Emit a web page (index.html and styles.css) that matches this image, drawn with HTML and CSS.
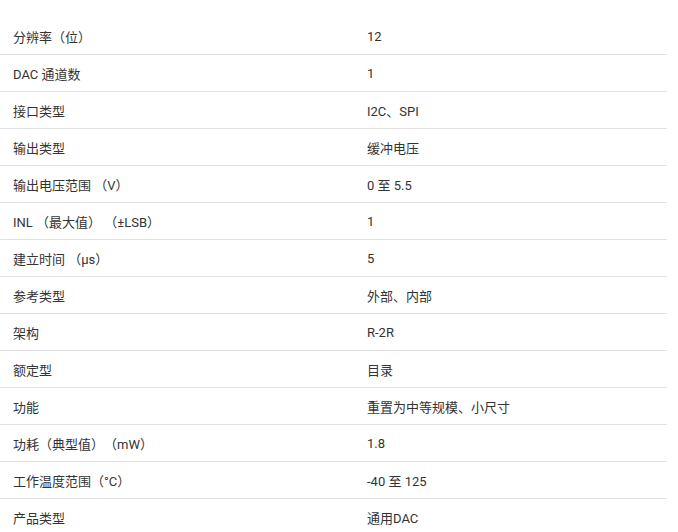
FILE: index.html
```html
<!DOCTYPE html>
<html lang="zh-CN">
<head>
<meta charset="utf-8">
<link rel="stylesheet" href="styles.css">
</head>
<body>
<div class="specs">
  <div class="row"><div class="k">分辨率（位）</div><div class="v">12</div></div>
  <div class="row"><div class="k">DAC 通道数</div><div class="v">1</div></div>
  <div class="row"><div class="k">接口类型</div><div class="v">I2C、SPI</div></div>
  <div class="row"><div class="k">输出类型</div><div class="v">缓冲电压</div></div>
  <div class="row"><div class="k">输出电压范围 （V）</div><div class="v">0 至 5.5</div></div>
  <div class="row"><div class="k">INL （最大值） （±LSB）</div><div class="v">1</div></div>
  <div class="row"><div class="k">建立时间 （µs）</div><div class="v">5</div></div>
  <div class="row"><div class="k">参考类型</div><div class="v">外部、内部</div></div>
  <div class="row"><div class="k">架构</div><div class="v">R-2R</div></div>
  <div class="row"><div class="k">额定型</div><div class="v">目录</div></div>
  <div class="row"><div class="k">功能</div><div class="v">重置为中等规模、小尺寸</div></div>
  <div class="row"><div class="k">功耗（典型值）（mW）</div><div class="v">1.8</div></div>
  <div class="row"><div class="k">工作温度范围（°C）</div><div class="v">-40 至 125</div></div>
  <div class="row"><div class="k">产品类型</div><div class="v">通用DAC</div></div>
</div>
</body>
</html>
```
FILE: styles.css
```css
html, body {
  margin: 0;
  padding: 0;
  background: #fff;
}
body {
  font-family: Roboto, "Noto Sans CJK SC", sans-serif;
  font-size: 13px;
  color: #333;
  text-spacing-trim: space-all;
}
.specs {
  width: 667px;
  padding-top: 18px;
}
.row {
  display: grid;
  grid-template-columns: 354px 1fr;
  height: 36px;
  align-items: center;
  border-bottom: 1px solid #e2e2e2;
}
.k, .v {
  padding-left: 13px;
  white-space: nowrap;
}
```
